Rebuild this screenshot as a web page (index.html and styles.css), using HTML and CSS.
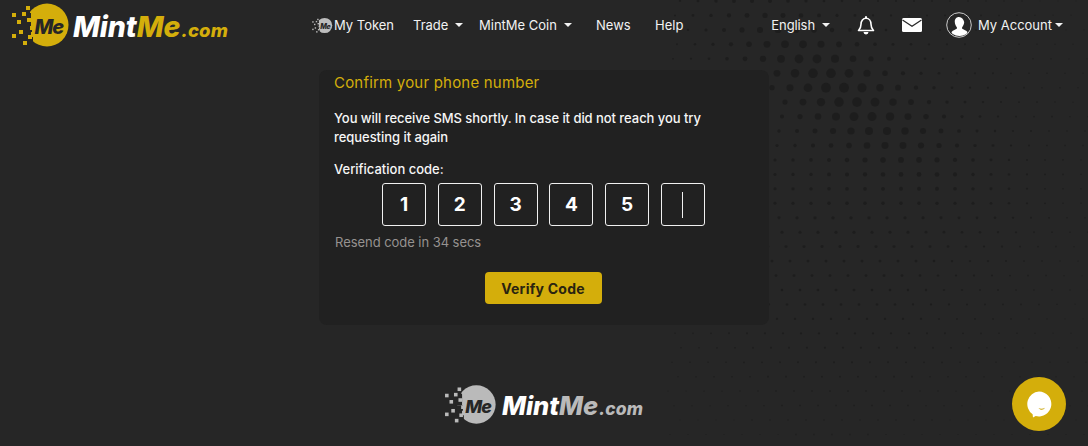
FILE: index.html
```html
<!DOCTYPE html>
<html lang="en">
<head>
<meta charset="utf-8">
<title>MintMe - Confirm your phone number</title>
<link rel="stylesheet" href="styles.css">
</head>
<body>
<svg class="dots" id="dots" width="1088" height="446" viewBox="0 0 1088 446" aria-hidden="true"></svg>
<svg class="defs" width="0" height="0" aria-hidden="true">
  <defs>
    <symbol id="mark" viewBox="0 0 58 48">
      <circle cx="35" cy="24" r="21.5" fill="currentColor"/>
      <g fill="#262626">
        <rect x="12" y="6" width="6" height="7"/><rect x="12" y="19" width="7" height="6"/><rect x="13" y="30" width="6" height="6"/>
        <rect x="14" y="12" width="5" height="9"/><rect x="13" y="25" width="7" height="6"/><rect x="14" y="36" width="7" height="6"/>
        <rect x="14" y="14" width="5" height="4"/>
      </g>
      <g fill="currentColor">
        <rect y="12" width="4" height="4"/><rect x="10" y="11" width="4" height="4"/><rect x="14" y="5" width="4" height="4"/>
        <rect x="5" y="19" width="4" height="4"/><rect y="33" width="4" height="4"/><rect x="7" y="29" width="4" height="4"/>
        <rect x="11" y="40" width="4" height="4"/><rect x="15" y="17" width="4" height="4"/><rect x="18" y="25" width="4" height="4"/>
        <rect x="16" y="34" width="4" height="4"/>
      </g>
      <text class="mark-text" x="22.5" y="33">Me</text>
    </symbol>
  </defs>
</svg>

<header class="topbar">
  <a class="brand" href="#">
    <svg class="brand-mark"><use href="#mark"/></svg>
    <span class="wordmark"><span class="w-mint">Mint</span><span class="w-me">Me</span><span class="w-com">.com</span></span>
  </a>
  <nav class="nav-main">
    <a class="nav-link nav-token" href="#"><svg class="token-mark"><use href="#mark"/></svg>My Token</a>
    <a class="nav-link caret nav-trade" href="#">Trade</a>
    <a class="nav-link caret nav-coin" href="#">MintMe Coin</a>
    <a class="nav-link nav-news" href="#">News</a>
    <a class="nav-link" href="#">Help</a>
  </nav>
  <nav class="nav-side">
    <a class="nav-link caret nav-lang" href="#">English</a>
    <a class="icon-link bell" href="#" aria-label="Notifications">
      <svg width="18" height="20" viewBox="0 0 18 20"><path d="M1.500 15.500c1.700-1.500 2.500-3.100 2.500-6.200C4 5.900 6.100 3.300 9 3.300s5 2.600 5 6c0 3.100.8 4.700 2.500 6.200z" fill="none" stroke="#fff" stroke-width="1.600" stroke-linejoin="round"/><path d="M8 2a1 1 0 0 1 2 0v1.400H8z" fill="#fff"/><path d="M6.500 17h5a2.500 2.500 0 0 1-5 0z" fill="#fff"/></svg>
    </a>
    <a class="icon-link mail" href="#" aria-label="Messages">
      <svg width="20" height="14" viewBox="0 0 20 14"><rect width="20" height="14" rx="1.500" fill="#fff"/><path d="M0.500 2 10 8.300 19.500 2" fill="none" stroke="#262626" stroke-width="1.200"/></svg>
    </a>
    <a class="nav-link caret account" href="#">
      <svg class="avatar" width="26" height="26" viewBox="0 0 26 26"><circle cx="13" cy="13" r="12.300" fill="#262626" stroke="#ddd" stroke-width="0.900"/><path d="M13 5c-2.900 0-4.300 2.300-4.200 4.900.1 2 .9 3.800 1.900 5 .4.600.3 1.700-.4 2.200-1.300.8-3.300 1.400-4.500 2.700-.7.800.2 1.700 1 2.300 1.800 1.300 4.100 2 6.700 2s4.900-.7 6.700-2c.8-.6 1.700-1.500 1-2.300-1.200-1.300-3.200-1.900-4.500-2.700-.7-.5-.8-1.600-.4-2.200 1-1.200 1.800-3 1.900-5C17.300 7.300 15.900 5 13 5z" fill="#fff"/></svg>
      My Account
    </a>
  </nav>
</header>

<main class="card">
  <h1 class="card-title">Confirm your phone number</h1>
  <p class="card-text">You will receive SMS shortly. In case it did not reach you try requesting it again</p>
  <p class="code-label">Verification code:</p>
  <div class="code-row">
    <div class="code-box">1</div>
    <div class="code-box">2</div>
    <div class="code-box">3</div>
    <div class="code-box">4</div>
    <div class="code-box">5</div>
    <div class="code-box"><span class="cursor"></span></div>
  </div>
  <p class="resend">Resend code in 34 secs</p>
  <div class="actions"><button class="verify" type="button">Verify Code</button></div>
</main>

<footer class="foot">
  <svg class="foot-mark"><use href="#mark"/></svg>
  <span class="wordmark foot-word"><span class="w-mint">Mint</span><span class="w-me">Me</span><span class="w-com">.com</span></span>
</footer>

<button class="chat" type="button" aria-label="Chat">
  <svg width="28" height="28" viewBox="0 0 28 28"><path d="M14 1.500a12.500 12.500 0 1 1-3.300 24.600L8 27.500l-.4-3.300A12.500 12.500 0 0 1 14 1.500z" fill="#fff"/><path d="M13.500 18c1.500 1 4.500 1 6.500-.2-1.300 2.600-5 2.600-6.500.2z" fill="#c9a50a"/></svg>
</button>
<script src="dots.js"></script>
</body>
</html>
```

FILE: styles.css
```css
* { box-sizing: border-box; }
html, body { height: 100%; }
body {
  margin: 0;
  height: 446px;
  overflow: hidden;
  position: relative;
  background: #262626;
  color: #fff;
  font-family: "Inter", "Liberation Sans", sans-serif;
  font-size: 13px;
}
a { color: inherit; text-decoration: none; }
p, h1 { margin: 0; }
.dots { position: absolute; left: 0; top: 0; }
.defs { position: absolute; }

.topbar {
  position: relative;
  display: flex;
  align-items: center;
  height: 50px;
  padding-left: 12px;
}
.brand { display: flex; align-items: center; width: 300px; color: #d4ae0b; }
.brand-mark { width: 58px; height: 48px; flex: none; }
.wordmark { font-weight: 800; font-style: italic; font-size: 28.500px; letter-spacing: -0.1px; margin-left: 3px; white-space: nowrap; position: relative; top: 1px; }
.w-mint { color: #fff; }
.w-me { color: #d4ae0b; }
.w-com { font-size: 18.500px; letter-spacing: 0.1px; margin-left: 1px; color: #d4ae0b; }
.mark-text { font-family: "Inter", sans-serif; font-weight: 800; font-style: italic; font-size: 20px; letter-spacing: -1px; fill: #262626; }

.nav-main, .nav-side { display: flex; align-items: center; }
.nav-link { display: inline-flex; align-items: center; white-space: nowrap; color: #f2f2f2; letter-spacing: 0; }
.caret::after {
  content: "";
  width: 0;
  height: 0;
  margin-left: 7px;
  border-left: 4px solid transparent;
  border-right: 4px solid transparent;
  border-top: 4px solid #f2f2f2;
}
.nav-token { width: 101px; }
.token-mark { width: 21px; height: 17px; color: #bdbdbd; flex: none; margin-right: 1px; }
.nav-trade { width: 66px; }
.nav-coin { width: 117px; }
.nav-news { width: 59px; }
.nav-side { margin-left: 88px; }
.nav-lang { letter-spacing: -0.1px; }
.icon-link { display: flex; align-items: center; justify-content: center; }
.bell { margin-left: 27px; }
.mail { margin-left: 27px; }
.account { margin-left: 24px; }
.avatar { margin-right: 6px; flex: none; }
.account::after { margin-left: 3px; }

.card {
  position: relative;
  width: 450px;
  height: 255px;
  margin: 20px auto 0;
  padding: 4px 15px 0;
  background: #212121;
  border-radius: 8px;
}
.card-title { font-size: 15px; font-weight: 400; line-height: 18px; color: #d4ae0b; letter-spacing: 0.2px; }
.card-text { margin-top: 17px; line-height: 19px; font-weight: 500; letter-spacing: -0.05px; color: #f6f6f6; }
.code-label { margin-top: 12px; line-height: 20px; font-weight: 500; letter-spacing: 0; color: #f6f6f6; }
.code-row { display: flex; gap: 11.800px; padding-left: 48px; margin-top: 4px; }
.code-box {
  display: flex;
  align-items: center;
  justify-content: center;
  width: 44px;
  height: 43px;
  border: 1px solid #f0f0f0;
  border-radius: 3px;
  font-size: 19px;
  font-weight: 700;
  color: #fff;
}
.cursor { width: 1px; height: 26px; background: #f0f0f0; }
.resend { margin-top: 6px; padding-left: 1px; line-height: 20px; color: #969290; letter-spacing: -0.05px; }
.actions { display: flex; justify-content: center; margin-top: 20px; padding-right: 2px; }
.verify {
  width: 117px;
  height: 32px;
  border: 0;
  border-radius: 4px;
  background: #d4ae0b;
  color: #2a2410;
  font-family: inherit;
  font-size: 14px;
  font-weight: 700;
  letter-spacing: 0.25px;
}

.foot { position: relative; display: flex; justify-content: center; align-items: center; margin-top: 58px; color: #bababa; }
.foot-mark { width: 52px; height: 43px; flex: none; }
.foot-word { font-size: 25.500px; margin-left: 5px; }
.foot-word .w-mint { color: #fff; }
.foot-word .w-me, .foot-word .w-com { color: #bababa; }
.foot-word .w-com { font-size: 17.500px; }

.chat {
  position: absolute;
  left: 1012px;
  top: 377px;
  width: 54px;
  height: 54px;
  padding: 0;
  border: 0;
  border-radius: 50%;
  background: #d4ae0b;
  display: flex;
  align-items: center;
  justify-content: center;
}
```

FILE: dots.js
```js
(function () {
  var svg = document.getElementById('dots');
  var offsets = [14, 9, 4, 11, 7, 3, 16, 11, 8, 5, 3, 1, 1, 1, 1, 5, 8, 12, 16, 2, 8, 13, 3, 9, 15, 6, 12, 2, 8, 14, 4];
  var html = '';
  for (var j = 0; j < offsets.length; j++) {
    var y = 1 + j * 14.45;
    for (var x = offsets[j] - 18; x < 1100; x += 18) {
      if (x < 668) continue;
      var u = x - 835, v = y - 85;
      var a = u * 0.82 + v * 0.57;
      var b = -u * 0.57 + v * 0.82;
      var big = 3.6 * Math.exp(-(a * a) / (120 * 120) - (b * b) / (42 * 42));
      var d = Math.sqrt(Math.pow(x - 840, 2) + Math.pow(y - 180, 2));
      var base = 1.8 - d / 220;
      if (base < 0.6) base = 0.6;
      var r = base + big;
      var o = d > 260 ? 0.55 : 0.85;
      html += '<circle cx="' + x + '" cy="' + y.toFixed(1) + '" r="' + r.toFixed(2) + '" fill="#1c1c1c" fill-opacity="' + o + '"/>';
    }
  }
  svg.innerHTML = html;
})();
```
